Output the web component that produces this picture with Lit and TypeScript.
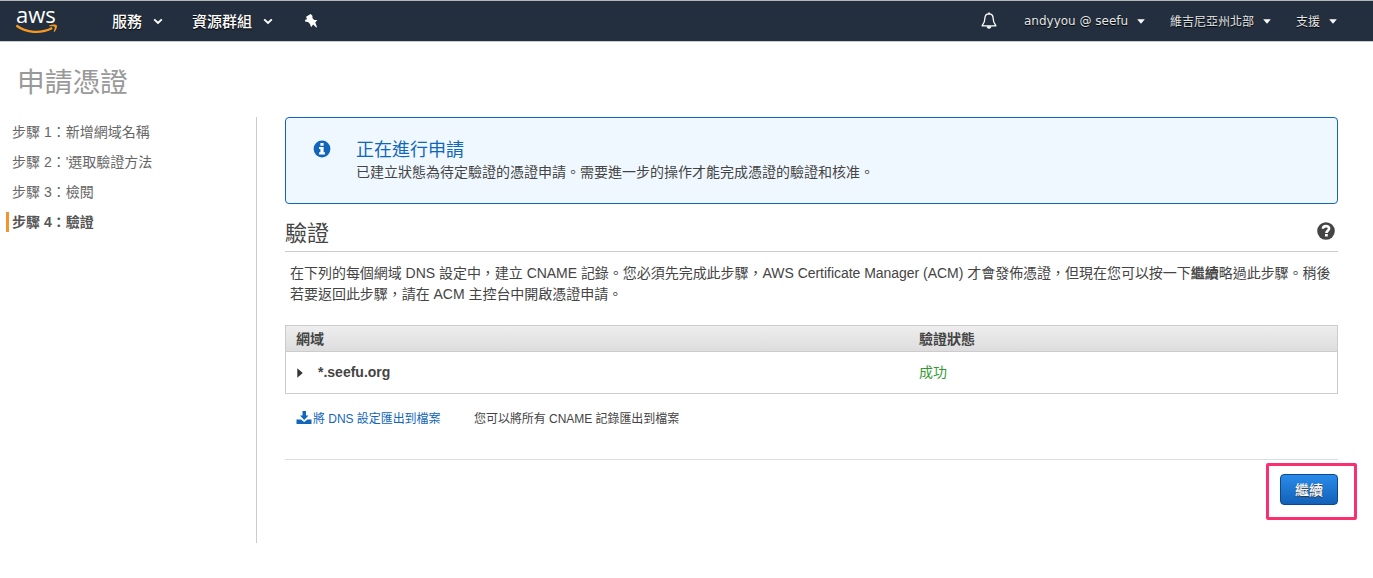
import { LitElement, html, css } from "lit";
import { customElement } from "lit/decorators.js";

const STEPS = ["步驟 1：新增網域名稱", "步驟 2：'選取驗證方法", "步驟 3：檢閱", "步驟 4：驗證"];
const CURRENT = 3;

const chevron = html`<svg class="chev" width="10" height="7" viewBox="0 0 10 7"><path d="M1.2 1.4 5 5l3.8-3.6" fill="none" stroke="#fff" stroke-width="1.9"/></svg>`;
const caret = html`<svg class="caret" width="8" height="5" viewBox="0 0 8 5"><path d="M.2.3h7.6L4 4.8z" fill="#fff"/></svg>`;

@customElement("app-root")
export class AppRoot extends LitElement {
  static styles = css`
    :host { display: block; height: 578px; overflow: hidden; background: #fff; color: #444;
      font-family: "Liberation Sans", "Noto Sans CJK TC", sans-serif; font-size: 14px; }
    * { box-sizing: border-box; }
    svg { display: block; flex: none; }
    .bar { height: 42px; border-top: 1px solid #b5b8ba; border-bottom: 1px solid #c9ccce; background: #232f3e;
      color: #fff; display: flex; align-items: center; white-space: nowrap;
      font-family: "Noto Sans", "Noto Sans CJK TC", sans-serif; font-size: 15px; font-weight: 500;
      text-shadow: 0 1px 1px #000; }
    .logo { width: 42px; height: 40px; margin-left: 16px; display: flex; flex-direction: column; }
    .word { font: 500 22px/22px "Open Sans", sans-serif; height: 22px; padding-top: 2px; letter-spacing: 0; text-shadow: none; margin-left: 0; }
    .smile { margin-top: 0; }
    .nav { display: flex; align-items: center; height: 22px; margin-bottom: 1px; }
    .services { margin-left: 54px; }
    .groups { margin-left: 29px; }
    .chev { margin: 2px 0 0 11px; }
    .pin { margin-left: 32px; }
    .bell { margin-left: auto; }
    .small { font-size: 12px; color: #e4e6e8; font-weight: 400; margin-bottom: 0; }
    .caret { margin: 1px 0 0 9px; }
    .user { margin-left: 27px; font-family: "DejaVu Sans", sans-serif; width: 121px; justify-content: space-between; }
    .region { margin-left: 25px; }
    .support { margin-left: 25px; margin-right: 36px; }
    h1 { margin: 0; padding: 21px 0 0 17px; height: 75px; font-size: 27.7px; line-height: 40px; font-weight: 400; color: #999; }
    .page { display: flex; }
    .side { width: 257px; height: 426px; border-right: 1px solid #ccc; padding: 0 0 0 6px; color: #666; }
    .step { height: 20px; line-height: 20px; margin: 5px 0 10px; padding-left: 3px; border-left: 3px solid transparent; white-space: nowrap; }
    .step.on { border-left-color: #f2952f; font-weight: 700; color: #555; }
    .main { width: 1053px; margin-left: 28px; }
    .notice { height: 87px; border: 1px solid #1166bb; border-radius: 4px; background: #f0f8ff; display: flex; padding: 20px 0 0 27px; }
    .info { margin-top: 2px; }
    .msg { margin-left: 25px; }
    .head { font-size: 18px; line-height: 24px; color: #1166bb; }
    .desc { line-height: 20px; }
    .sec { height: 48px; border-bottom: 1px solid #ccc; display: flex; align-items: center; justify-content: space-between; padding: 9px 3px 0 0; }
    h2 { margin: 0; font-size: 22px; line-height: 30px; font-weight: 400; padding-top: 4px; }
    .help { margin-top: -2px; }
    .para { margin: 0; padding: 11px 0 0 5px; height: 73px; line-height: 21px; white-space: nowrap; letter-spacing: -.03px; }
    .table { border: 1px solid #ccc; height: 69px; }
    .row { display: grid; align-items: center; }
    .th { height: 26px; border-bottom: 1px solid #ccc; background: linear-gradient(#eee, #ddd); font-weight: 700; padding: 0 0 2px 10px; grid-template-columns: 623px 1fr; }
    .td { height: 41px; padding: 0 0 2px 11px; grid-template-columns: 622px 1fr; }
    .domain { display: flex; align-items: center; gap: 15px; font-weight: 700; }
    .domain svg { margin-top: 2px; }
    .ok { color: #339933; margin-top: -2px; }
    .export { display: flex; align-items: center; height: 20px; margin: 13px 0 0 11px; font-size: 12px; white-space: nowrap; letter-spacing: -.04px; }
    .link { display: flex; align-items: center; gap: 1px; color: #1166bb; width: 178px; }
    .link svg { margin-top: 2px; }
    .foot { margin-top: 32px; border-top: 1px solid #ddd; height: 62px; display: flex; justify-content: flex-end; }
    .frame { width: 91px; height: 57px; margin: 3px -19px 0 0; border: 3px solid #fa2f70; border-radius: 2px; flex: none; padding: 8px 0 0 11px; }
    .btn { display: block; width: 58px; height: 31px; padding: 0 0 1px; border: 1px solid #084a8c; border-radius: 4px; background: linear-gradient(#2a8bea, #1261b8); color: #fff; font: 500 14px/28px "Noto Sans CJK TC", sans-serif; text-shadow: 0 1px 1px #333; }
  `;

  render() {
    return html`
      <header class="bar">
        <div class="logo">
          <span class="word">aws</span>
          <svg class="smile" width="42" height="12" viewBox="0 0 42 12"><path d="M.3 2.500C10 10 25 11 36.2 5" fill="none" stroke="#f7981f" stroke-width="2.300"/><path d="M33.400 2.200c3-1 6.600-1.100 7.400 0 .7 1.500-.5 5-2.500 6.700l-.7-.4c1-2.200 1.400-4 .9-4.700-.6-.7-2.800-.7-5.100-.5z" fill="#f7981f"/></svg>
        </div>
        <div class="nav services">服務${chevron}</div>
        <div class="nav groups">資源群組${chevron}</div>
        <svg class="pin" width="13" height="14" viewBox="0 0 13 14"><path d="M5.600.1 7.400 1.700 7.500 4.300 9.300 6 12.300 6.100 10.300 8.600 12 13.200 11.200 13.600 8.200 10.600 6 13.200 5 9.900 3 8 0 7.600.2 5.800 2 5.200 1.100 2.800z" fill="#fff"/></svg>
        <svg class="bell" width="16" height="18" viewBox="0 0 16 18"><path d="M8 1.800c-2.700 0-4.100 1.800-4.100 4.500 0 3.500-.8 5.200-2.800 7.500h13.800c-2-2.300-2.800-4-2.800-7.500 0-2.700-1.400-4.500-4.100-4.500z" fill="none" stroke="#fff" stroke-width="1.300" stroke-linejoin="round"/><path d="M7.200.4h1.600v2H7.200zM5.700 14.200h4.600c0 1.500-.9 2.500-2.300 2.500s-2.300-1-2.300-2.500z" fill="#fff"/></svg>
        <div class="nav small user"><span>andyyou @ seefu</span>${caret}</div>
        <div class="nav small region">維吉尼亞州北部${caret}</div>
        <div class="nav small support">支援${caret}</div>
      </header>
      <h1>申請憑證</h1>
      <div class="page">
        <nav class="side">
          ${STEPS.map((s, i) => html`<div class="step ${i === CURRENT ? "on" : ""}">${s}</div>`)}
        </nav>
        <main class="main">
          <section class="notice">
            <svg class="info" width="18" height="18" viewBox="0 0 18 18"><circle cx="9" cy="9" r="8.400" fill="#1166bb"/><path d="M7.400 3h3.200v2.700H7.400zM6.100 6.900h4.500v5.300h1.300v2.300H6.100v-2.300h1.300V9.100H6.100z" fill="#fff"/></svg>
            <div class="msg">
              <div class="head">正在進行申請</div>
              <div class="desc">已建立狀態為待定驗證的憑證申請。需要進一步的操作才能完成憑證的驗證和核准。</div>
            </div>
          </section>
          <div class="sec">
            <h2>驗證</h2>
            <svg class="help" width="18" height="18" viewBox="0 0 18 18"><circle cx="9" cy="9" r="8.800" fill="#444"/><path d="M5.900 6.800C6 4.900 7.300 4.100 9 4.100c2 0 3.100 1 3.100 2.400 0 2.100-2.700 2.200-2.700 4.400" fill="none" stroke="#fff" stroke-width="2.600"/><path d="M8 12h2.800v2.500H8z" fill="#fff"/></svg>
          </div>
          <p class="para">在下列的每個網域 DNS 設定中，建立 CNAME 記錄。您必須先完成此步驟，AWS Certificate Manager (ACM) 才會發佈憑證，但現在您可以按一下<b>繼續</b>略過此步驟。稍後<br>若要返回此步驟，請在 ACM 主控台中開啟憑證申請。</p>
          <div class="table">
            <div class="row th"><span>網域</span><span>驗證狀態</span></div>
            <div class="row td">
              <span class="domain"><svg width="6" height="10" viewBox="0 0 6 10"><path d="M.3.300 5.700 5 .3 9.700z" fill="#333"/></svg>*.seefu.org</span>
              <span class="ok">成功</span>
            </div>
          </div>
          <div class="export">
            <span class="link"><svg width="16" height="14" viewBox="0 0 16 14"><path d="M6.500 0H10v4.500h2.500L8.200 9 4 4.500h2.500zM.5 8.500h4.400L8.200 11l3.300-2.500h4V13H.5z" fill="#1166bb"/></svg>將 DNS 設定匯出到檔案</span>
            <span>您可以將所有 CNAME 記錄匯出到檔案</span>
          </div>
          <div class="foot"><div class="frame"><button class="btn">繼續</button></div></div>
        </main>
      </div>
    `;
  }
}
